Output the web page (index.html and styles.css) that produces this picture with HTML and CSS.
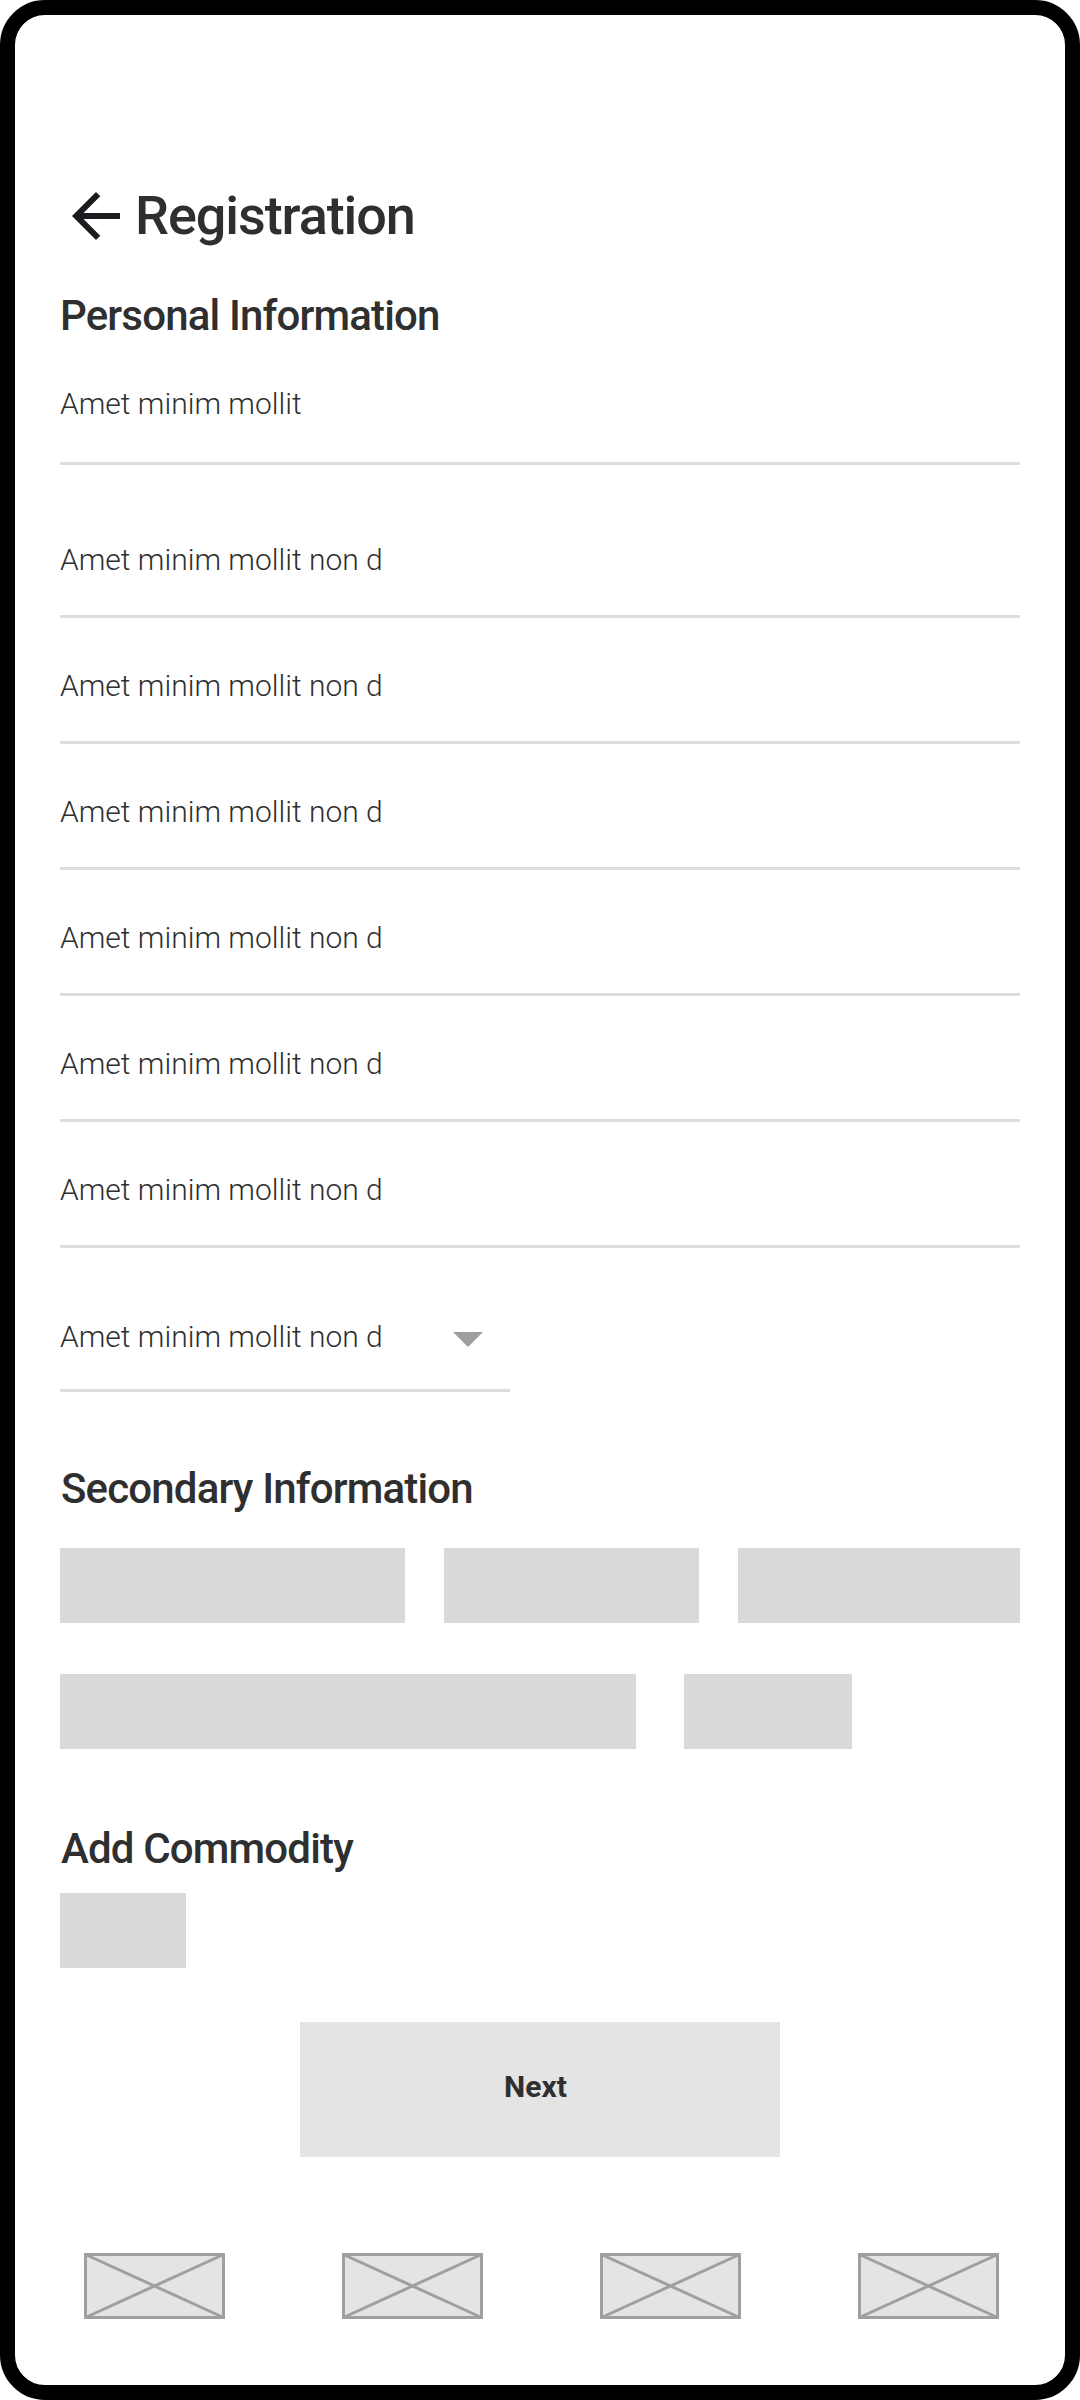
FILE: index.html
```html
<!DOCTYPE html>
<html lang="en">
<head>
<meta charset="utf-8">
<title>Registration</title>
<link rel="stylesheet" href="styles.css">
</head>
<body>
<main class="screen">
  <header class="title-bar">
    <svg class="back" viewBox="0 0 24 24"><path d="M7.825 13L13.425 18.6L12 20L4 12L12 4L13.425 5.4L7.825 11H20V13H7.825Z"/></svg>
    <h1 class="title">Registration</h1>
  </header>

  <section class="personal">
    <h2 class="heading">Personal Information</h2>
    <div class="field field-first">Amet minim mollit</div>
    <div class="field-list">
      <div class="field">Amet minim mollit non d</div>
      <div class="field">Amet minim mollit non d</div>
      <div class="field">Amet minim mollit non d</div>
      <div class="field">Amet minim mollit non d</div>
      <div class="field">Amet minim mollit non d</div>
      <div class="field">Amet minim mollit non d</div>
    </div>
    <div class="field field-select">
      <span>Amet minim mollit non d</span>
      <svg class="caret" viewBox="0 0 30 15"><path d="M0 0H30L15 15Z"/></svg>
    </div>
  </section>

  <section class="secondary">
    <h2 class="heading heading-inset">Secondary Information</h2>
    <div class="chips chips-top">
      <div class="chip"></div>
      <div class="chip"></div>
      <div class="chip"></div>
    </div>
    <div class="chips chips-bottom">
      <div class="chip"></div>
      <div class="chip"></div>
    </div>
  </section>

  <section class="commodity">
    <h2 class="heading heading-inset">Add Commodity</h2>
    <div class="chip chip-add"></div>
  </section>

  <button class="next" type="button">Next</button>

  <nav class="tabs">
    <svg class="tab" viewBox="0 0 141 66"><rect x="1.5" y="1.5" width="138" height="63"/><path d="M1.5 1.5L139.5 64.5M139.5 1.5L1.5 64.5"/></svg>
    <svg class="tab" viewBox="0 0 141 66"><rect x="1.5" y="1.5" width="138" height="63"/><path d="M1.5 1.5L139.5 64.5M139.5 1.5L1.5 64.5"/></svg>
    <svg class="tab" viewBox="0 0 141 66"><rect x="1.5" y="1.5" width="138" height="63"/><path d="M1.5 1.5L139.5 64.5M139.5 1.5L1.5 64.5"/></svg>
    <svg class="tab" viewBox="0 0 141 66"><rect x="1.5" y="1.5" width="138" height="63"/><path d="M1.5 1.5L139.5 64.5M139.5 1.5L1.5 64.5"/></svg>
  </nav>
</main>
</body>
</html>
```
FILE: styles.css
```css
* { box-sizing: border-box; }

body {
  margin: 0;
  background: #fff;
  color: #2f2f2f;
  font-family: Roboto, sans-serif;
}

svg { display: block; }

.screen {
  display: flex;
  flex-direction: column;
  width: 1080px;
  height: 2400px;
  padding: 165px 45px 0;
  border: 15px solid #000;
  border-radius: 45px;
  background: #fff;
}

.title-bar {
  display: flex;
  gap: 3px;
  height: 72px;
}

.back {
  width: 72px;
  height: 72px;
  fill: #1d1b20;
}

.title {
  margin: 4px 0 0;
  font-size: 54px;
  font-weight: 500;
  line-height: 63px;
  letter-spacing: -0.02em;
}

.heading {
  margin: 0;
  font-size: 42px;
  font-weight: 500;
  line-height: 49px;
  letter-spacing: -0.02em;
}

.heading-inset { padding-left: 1px; }

.personal { margin-top: 39px; }

.field {
  height: 76px;
  border-bottom: 3px solid #ddd;
  font-size: 30px;
  font-weight: 300;
  line-height: 35px;
}

.field-first {
  height: 79px;
  margin-top: 46px;
}

.field-list {
  display: flex;
  flex-direction: column;
  gap: 50px;
  margin-top: 77px;
}

.field-select {
  display: flex;
  justify-content: space-between;
  width: 450px;
  height: 73px;
  margin-top: 71px;
  padding-right: 27px;
}

.caret {
  width: 30px;
  height: 15px;
  margin-top: 13px;
  fill: #9e9e9e;
}

.secondary { margin-top: 72px; }

.chips { display: grid; }

.chips-top {
  grid-template-columns: 345px 255px 282px;
  column-gap: 39px;
  margin-top: 35px;
}

.chips-bottom {
  grid-template-columns: 576px 168px;
  column-gap: 48px;
  margin-top: 51px;
}

.chip {
  height: 75px;
  background: #d9d9d9;
}

.commodity { margin-top: 75px; }

.chip-add {
  width: 126px;
  margin-top: 20px;
}

.next {
  align-self: center;
  width: 480px;
  height: 135px;
  margin-top: 54px;
  padding: 0 9px 6px 0;
  border: 0;
  background: #e4e4e4;
  color: inherit;
  font-family: inherit;
  font-size: 30px;
  font-weight: 700;
  line-height: 35px;
}

.tabs {
  display: flex;
  justify-content: space-between;
  margin-top: 96px;
  padding: 0 21px 0 24px;
}

.tab {
  width: 141px;
  height: 66px;
  fill: #e4e4e4;
  stroke: #9f9f9f;
  stroke-width: 3;
}
```
